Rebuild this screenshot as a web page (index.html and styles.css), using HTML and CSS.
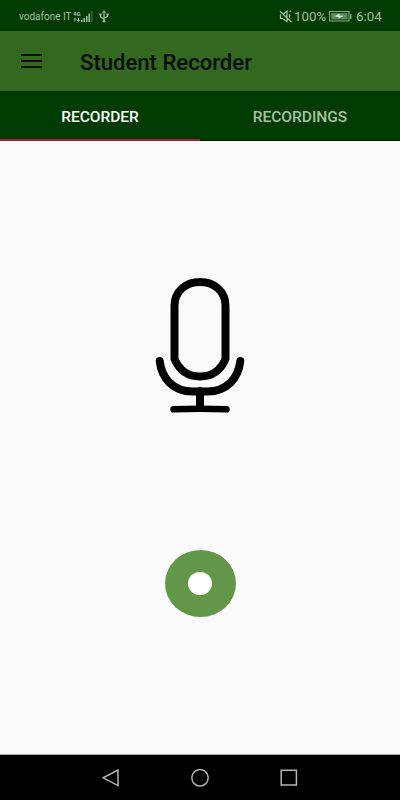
FILE: index.html
```html
<!DOCTYPE html>
<html lang="en">
<head>
    <meta charset="UTF-8">
    <meta name="viewport" content="width=device-width, initial-scale=1.0">
    <title>Student Recorder</title>
    <link rel="stylesheet" href="styles.css">
</head>
<body>

<div class="status-bar">
    <span class="carrier">vodafone IT</span>
    <svg class="signal" width="20" height="13" viewBox="0 0 20 13">
        <text x="0" y="5.5" class="network">4G</text>
        <path d="M2 7.500L.5 9.500H3.500zM5.500 12L4 10h3z"/>
        <path d="M1.500 9.500h1v2h-1zM5 8h1v2H5zM8 10h1.500v2H8zM10.500 8H12v4h-1.500zM13 6h1.500v6H13zM15.500 3.500H17V12h-1.500z"/>
        <path class="weak" d="M18.200 1h1.300v11h-1.300z"/>
    </svg>
    <svg class="usb" width="10" height="13" viewBox="0 0 10 13">
        <path class="line" d="M5 2v9M1.500 4.500v2.300L5 9M8.500 4.500v1.800L5 8.200"/>
        <path d="M5 0l1.800 2.700H3.200zM.4 3.500h2.200v2H.4zM7.400 3.500h2.200v2H7.400z"/>
        <circle cx="5" cy="11.300" r="1.300"/>
    </svg>
    <svg class="mute" width="14" height="13" viewBox="0 0 14 13">
        <path class="line" d="M1.500 4.500v4h2.300L8 11.500V1L4.500 4M1 1.200l11.500 11M10 4.500c.8.900.9 2 .5 3M10.500 1.700l1.500-.9"/>
    </svg>
    <span class="percent">100%</span>
    <svg class="battery" width="24" height="11" viewBox="0 0 24 11">
        <rect class="frame" x=".5" y=".5" width="19.500" height="9.500"/>
        <rect class="fill" x="2" y="2" width="16.500" height="6.500"/>
        <path class="bolt" d="M5 5.200l5.500-2.400v1.700l4.500.3-5.500 2.700V6z"/>
        <path d="M21.200 3h1.200v5h-1.200z"/>
    </svg>
    <span class="clock">6:04</span>
</div>

<header class="toolbar">
    <svg class="menu" width="21" height="14" viewBox="0 0 21 14">
        <path d="M0 1h21M0 7h21M0 13h21"/>
    </svg>
    <h1>Student Recorder</h1>
</header>

<nav class="tabs">
    <div class="tab active">RECORDER</div>
    <div class="tab">RECORDINGS</div>
</nav>

<main class="content">
    <svg class="mic" width="90" height="136" viewBox="155 277 90 136">
        <path d="M174.500 306C174.500 291 186 282 200 282s25.500 9 25.500 24v53c-4.500 10.500-12.500 17.500-25.500 17.500S179 369.500 174.500 359z"/>
        <path d="M159.700 361c2 17 13 30.500 33 30.500h14.600c20 0 31-13.500 33-30.500M200 391v16"/>
        <path class="base" d="M173.500 409.300q26.500-1 53 0"/>
    </svg>
    <button class="record" aria-label="Record"><span></span></button>
</main>

<footer class="nav-bar">
    <svg width="18" height="18" viewBox="0 0 18 18"><path d="M16 1v15.600L1.200 8.800z"/></svg>
    <svg width="18" height="18" viewBox="0 0 18 18"><circle cx="9" cy="8.800" r="8.200"/></svg>
    <svg width="18" height="18" viewBox="0 0 18 18"><rect x="1.200" y="1.300" width="15.200" height="14.700"/></svg>
</footer>

</body>
</html>
```

FILE: styles.css
```css
* {
    box-sizing: border-box;
}

body {
    margin: 0;
    height: 800px;
    display: flex;
    flex-direction: column;
    overflow: hidden;
    background: #fafafa;
    font-family: Roboto, sans-serif;
}

svg {
    display: block;
    flex-shrink: 0;
}

.status-bar {
    height: 31px;
    display: flex;
    align-items: center;
    padding: 1px 18px 0 19px;
    background: #003c00;
    color: #a4bfa4;
    fill: #a4bfa4;
}

.status-bar .line {
    fill: none;
    stroke: #a4bfa4;
    stroke-width: 1.2;
}

.carrier {
    width: 54px;
    font-size: 10px;
    white-space: nowrap;
}

.network {
    font-size: 6px;
    font-weight: bold;
}

.weak {
    fill: #3f703f;
}

.usb {
    margin-left: 6px;
}

.mute {
    margin-left: auto;
    margin-right: 1px;
}

.percent {
    width: 35px;
    font-size: 13.3px;
}

.battery .frame {
    fill: none;
    stroke: #8aaa8a;
}

.battery .fill {
    fill: #5c875c;
}

.battery .bolt {
    fill: #d5e2d5;
}

.clock {
    width: 26px;
    margin-left: 3px;
    font-size: 13.3px;
}

.toolbar {
    height: 60px;
    display: flex;
    align-items: center;
    padding-left: 21px;
    background: #33691e;
}

.menu {
    stroke: #071003;
    stroke-width: 1.8;
}

.toolbar h1 {
    margin: 2px 0 0 38px;
    color: #050d02;
    font-size: 22.1px;
    font-weight: 500;
}

.tabs {
    height: 50px;
    display: flex;
    background: #003c00;
    border-bottom: 1px solid #001800;
}

.tab {
    flex: 1;
    display: flex;
    align-items: center;
    justify-content: center;
    height: 50px;
    padding-top: 3px;
    border-bottom: 2px solid transparent;
    color: #a6c2a6;
    font-size: 15.5px;
    font-weight: 500;
}

.tab.active {
    color: #fff;
    border-bottom-color: #a01f43;
}

.content {
    flex: 1;
    display: flex;
    flex-direction: column;
    align-items: center;
    padding-top: 136px;
}

.mic {
    fill: none;
    stroke: #000;
    stroke-width: 8;
    stroke-linecap: round;
    stroke-linejoin: round;
}

.mic .base {
    stroke-width: 6.5;
}

.record {
    width: 71px;
    height: 67px;
    margin-top: 137px;
    padding: 0;
    display: flex;
    align-items: center;
    justify-content: center;
    border: none;
    border-radius: 50%;
    background: #629749;
}

.record span {
    width: 24px;
    height: 23px;
    border-radius: 50%;
    background: #fff;
}

.nav-bar {
    height: 46px;
    display: flex;
    justify-content: center;
    align-items: center;
    gap: 71px;
    border-top: 1px solid #aaa;
    background: #000;
    fill: none;
    stroke: #b5b5b5;
    stroke-width: 1.5;
}
```
